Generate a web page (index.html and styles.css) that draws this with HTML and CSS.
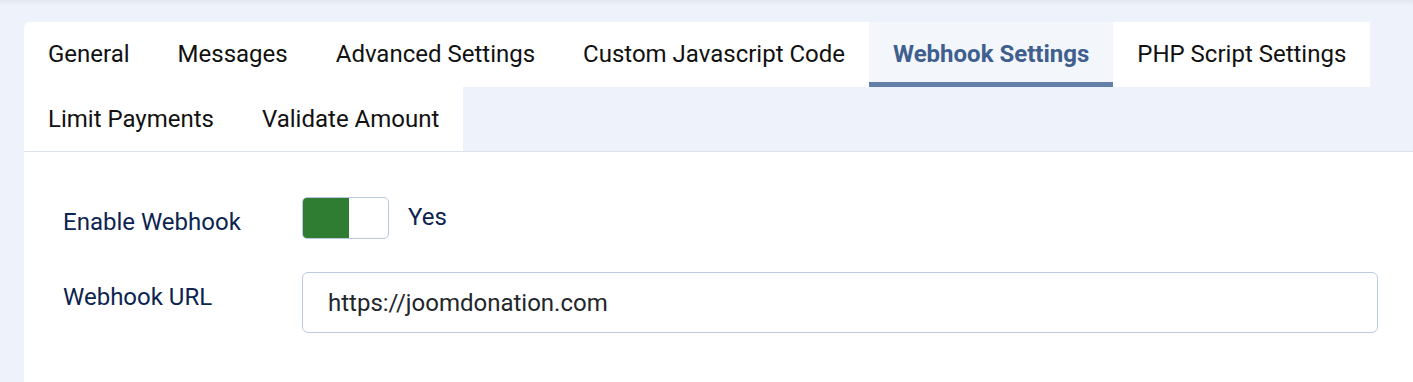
FILE: index.html
```html
<!DOCTYPE html>
<html lang="en">
<head>
 <meta charset="UTF-8">
 <meta name="viewport" content="width=device-width, initial-scale=1.0">
 <title>Webhook Settings</title>
 <link rel="stylesheet" href="styles.css">
</head>
<body>
<div class="card">
 <div class="tab-list">
   <div class="tab">General</div>
   <div class="tab">Messages</div>
   <div class="tab">Advanced Settings</div>
   <div class="tab">Custom Javascript Code</div>
   <div class="tab active">Webhook Settings</div>
   <div class="tab">PHP Script Settings</div>
   <div class="tab">Limit Payments</div>
   <div class="tab">Validate Amount</div>
 </div>
 <div class="tab-content">
   <div class="field">
     <label class="field-label">Enable Webhook</label>
     <div class="field-control">
       <div class="switch"><span class="switch-on"></span></div>
       <span class="switch-text">Yes</span>
     </div>
   </div>
   <div class="field">
     <label class="field-label url-label" for="webhook-url">Webhook URL</label>
     <div class="field-control">
       <input type="text" id="webhook-url" class="text-input" value="https://joomdonation.com">
     </div>
   </div>
 </div>
</div>
</body>
</html>
```

FILE: styles.css
```css
body {
  font-family: Roboto, "Liberation Sans", sans-serif;
  background-color: #eef3fb;
  margin: 0;
  padding: 22px 0 0 24px;
  box-shadow: inset 0 5px 5px -3px rgba(0, 0, 0, 0.06);
}
.card {
  border-top-left-radius: 6px;
  overflow: hidden;
}
.tab-list {
  display: flex;
  flex-wrap: wrap;
}
.tab {
  background-color: #ffffff;
  color: #111111;
  font-size: 24px;
  line-height: 36px;
  padding: 14px 24px 14.5px;
  white-space: nowrap;
}
.tab.active {
  background-color: #f3f6fa;
  color: #3f5f8f;
  font-weight: bold;
  box-shadow: inset 0 -5px 0 #6380a8;
}
.tab-content {
  background-color: #ffffff;
  border-top: 1px solid #dce3ec;
  padding: 45px 35px 20px 39px;
}
.field {
  display: grid;
  grid-template-columns: 239px 1fr;
  align-items: start;
  margin-bottom: 33px;
}
.field-label {
  color: #0d2450;
  font-size: 24px;
  line-height: 29px;
  padding-top: 11px;
}
.url-label {
  line-height: 36px;
  padding-top: 7px;
}
.field-control {
  display: flex;
  align-items: center;
}
.switch {
  width: 85px;
  height: 40px;
  border: 1px solid #b9c8dd;
  border-radius: 5px;
  overflow: hidden;
  background-color: #ffffff;
}
.switch-on {
  display: block;
  width: 46px;
  height: 100%;
  background-color: #2f7d32;
}
.switch-text {
  color: #0d2450;
  font-size: 24px;
  margin-left: 19px;
  margin-top: -2px;
}
.text-input {
  width: 100%;
  height: 61px;
  box-sizing: border-box;
  padding: 0 25px;
  border: 1px solid #bccbe0;
  border-radius: 6px;
  font-family: Roboto, "Liberation Sans", sans-serif;
  font-size: 24px;
  color: #22262a;
}
```
